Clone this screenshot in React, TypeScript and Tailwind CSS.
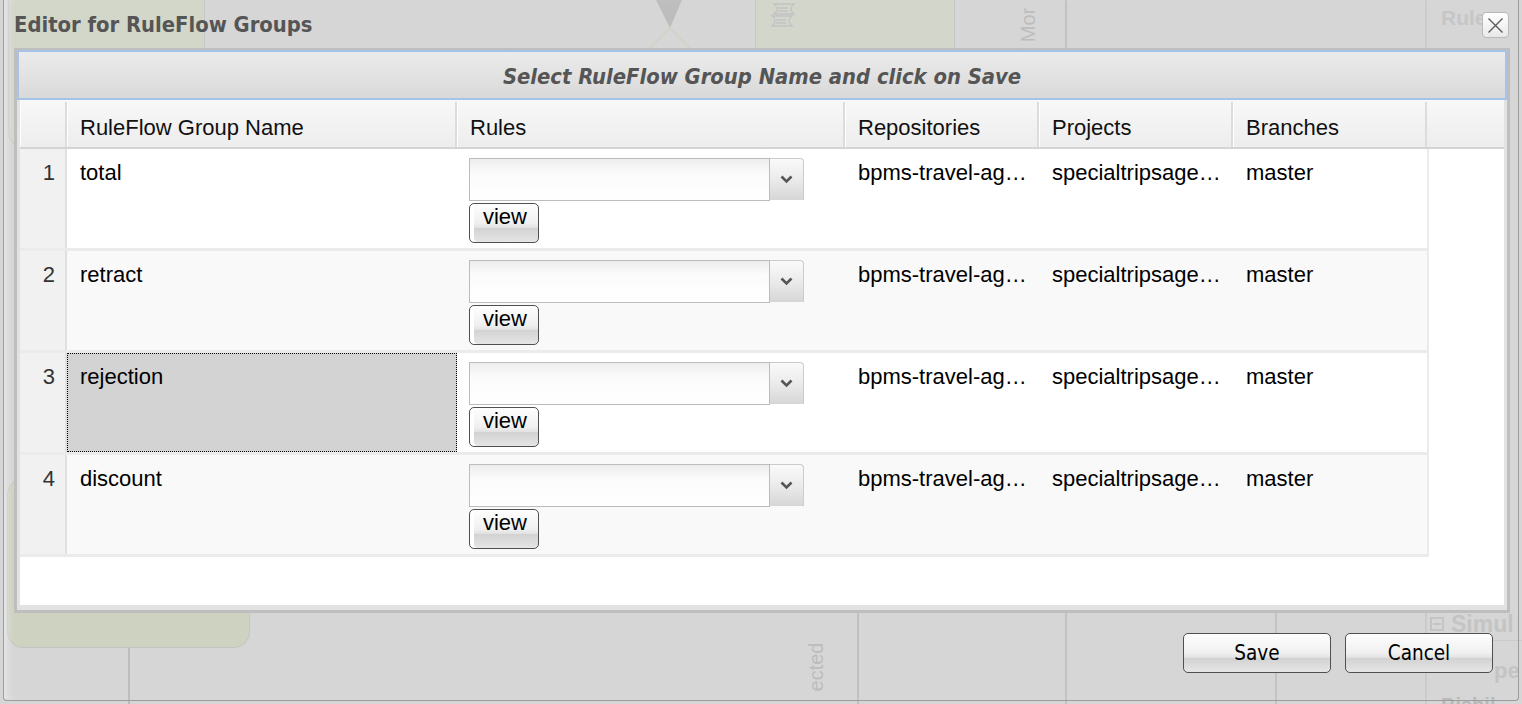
import React from 'react';

const rows = [
    { n: 1, name: 'total' },
    { n: 2, name: 'retract' },
    { n: 3, name: 'rejection', selected: true },
    { n: 4, name: 'discount' },
];

const btnBg = 'bg-[linear-gradient(to_bottom,#fefefe_0%,#f0f0f0_50%,#e2e2e2_62%,#d2d2d2_64%,#e6e6e6_100%)]';
const tahoma = "font-['DejaVu_Sans_Condensed','DejaVu_Sans',sans-serif]";

// faded process canvas that sits behind the modal
const Canvas: React.FC = () => (
    <div className="absolute inset-0 overflow-hidden">
        <div className="absolute left-[8px] top-[-20px] w-[197px] h-[168px] rounded-[16px] border border-[#c6c6c6] bg-[#d3d7c9]" />
        <div className="absolute left-[7px] top-[478px] w-[243px] h-[170px] rounded-[16px] border border-[#c4c4c4] bg-[#cdd2c1]" />
        <div className="absolute left-[755px] top-[-30px] w-[200px] h-[120px] rounded-[14px] border border-[#c6c6c6] bg-[#d3d6cb]" />
        <svg className="absolute left-[766px] top-[2px]" width="34" height="30" viewBox="0 0 34 30" fill="none" stroke="#c4c4c4" strokeWidth="1.5">
            <path d="M8 2h20c-4 3-4 7 0 10H8c4-3 4-7 0-10z" />
            <path d="M6 14h20c-4 3-4 7 0 10H6c4-3 4-7 0-10z" />
            <path d="M12 6h10M12 9h10M10 18h10M10 21h10" />
        </svg>
        <svg className="absolute left-[640px] top-0" width="60" height="50" viewBox="0 0 60 50">
            <path d="M16 0h26L30 28z" fill="#bdbdbd" />
            <path d="M30 28L8 50M30 28l22 22" stroke="#d2d2c2" strokeWidth="1.5" fill="none" />
        </svg>
        <div className="absolute left-[128px] top-[648px] w-[2px] h-[60px] bg-[#bcbcbc]" />
        <div className="absolute left-[857px] top-[612px] w-[2px] h-[100px] bg-[#c0c0c0]" />
        <div className="absolute left-[1065px] top-0 w-[2px] h-[704px] bg-[#c2c2c2]" />
        <div className="absolute left-[1275px] top-[612px] w-[2px] h-[100px] bg-[#c2c2c2]" />
        <div className="absolute left-[1425px] top-0 w-[2px] h-[704px] bg-[#cbcbcb]" />
        <div className="absolute left-[1011px] top-[10px] -rotate-90 origin-center text-[20px] text-[#bdbdbd]">Mor</div>
        <div className="absolute left-[792px] top-[652px] -rotate-90 origin-center text-[20px] text-[#bdbdbd]">ected</div>
        <div className="absolute left-[1441px] top-[2px] text-[21px] font-bold text-[#c6c6c6]">Rule</div>
        <div className="absolute left-[1430px] top-[607px] flex items-center gap-[7px] text-[23px] font-bold text-[#c4c4c4]">
            <span className="w-[14px] h-[14px] border-2 border-[#c4c4c4] flex items-center justify-center"><span className="w-[8px] h-[2px] bg-[#c4c4c4]" /></span>
            Simul
        </div>
        <div className="absolute left-[1430px] top-[640px] w-[92px] h-[1px] bg-[#cacaca]" />
        <div className="absolute left-[1494px] top-[654px] text-[22px] font-bold text-[#c4c4c4]">pe</div>
        <div className="absolute left-[1441px] top-[690px] text-[20px] font-bold text-[#b8b8b8]">Bisbil</div>
    </div>
);

const RuleSelect: React.FC = () => (
    <div className="flex w-[335px] h-[43px]">
        <div className="w-[301px] h-[43px] border border-[#bcbcbc] bg-[linear-gradient(to_bottom,#ededed_0%,#fbfbfb_35%,#ffffff_100%)]" />
        <div className="w-[34px] h-[42px] border-t border-r border-[#cccccc] rounded-tr-[4px] bg-[linear-gradient(to_bottom,#fafafa_0%,#e9e9e9_55%,#d6d6d6_100%)] flex items-center justify-center">
            <svg width="13" height="9" viewBox="0 0 13 9">
                <path d="M1.5 1.5L6.5 6.5L11.5 1.5" stroke="#555" strokeWidth="2.6" fill="none" />
            </svg>
        </div>
    </div>
);

const ViewButton: React.FC = () => (
    <button className={`mt-[2px] w-[70px] h-[40px] rounded-[5px] border border-[#505050] ${btnBg} text-[22px] leading-none text-black pb-[13px] pl-[2px] shadow-[inset_4px_0_0_#ffffff]`}>
        view
    </button>
);

const headCell = 'h-full flex items-center pl-[13px] pt-[5px] border-r-2 border-[#dcdcdc] shadow-[inset_1px_0_0_#ffffff]';

export default function App() {
    return (
        <div className="relative w-[1522px] h-[704px] overflow-hidden bg-[#d6d6d6] font-['Liberation_Sans',Arial,sans-serif]">
            <Canvas />

            {/* modal */}
            <div className="absolute left-[3px] top-0 w-[1516px] h-[701px] border border-t-0 border-[#9c9c9c] rounded-b-[4px] shadow-[inset_8px_0_8px_-6px_#ececec] flex flex-col">
                <div className="h-[48px] flex items-center justify-between pl-[10px] pr-[9px]">
                    <span className={`text-[21.8px] font-bold text-[#555555] ${tahoma} pt-[2px]`}>Editor for RuleFlow Groups</span>
                    <button className="mt-[2px] w-[27px] h-[26px] rounded-[4px] border border-[#b9b9b9] bg-[linear-gradient(to_bottom,#ffffff,#e9e9e9)] flex items-center justify-center">
                        <svg width="17" height="17" viewBox="0 0 17 17">
                            <path d="M1.5 1.5L15.5 15.5M15.5 1.5L1.5 15.5" stroke="#5a5a5a" strokeWidth="1.4" />
                        </svg>
                    </button>
                </div>

                {/* panel */}
                <div className="ml-[10px] w-[1496px] h-[565px] bg-[#bebebe] pl-[3px] pr-[3px] pt-[2px] pb-[3px]">
                    <div className="w-full h-full bg-[#e2e2e2] flex flex-col">
                        <div className="h-[50px] border-2 border-[#a6c4ea] bg-[linear-gradient(to_bottom,#ebebeb_0%,#e4e4e4_40%,#d9d9d9_100%)] flex items-center justify-center pt-[5px]">
                            <span className={`text-[21.8px] font-bold italic text-[#555555] ${tahoma}`}>Select RuleFlow Group Name and click on Save</span>
                        </div>
                        <div className="ml-[3px] mr-[3px] h-[505px] bg-white flex flex-col">
                            {/* header */}
                            <div className="h-[49px] flex pt-[2px] border-b-2 border-[#d4d4d4] bg-[linear-gradient(to_bottom,#f8f8f8,#ededed)] text-[22px] text-[#111]">
                                <div className={`w-[47px] ${headCell}`} />
                                <div className={`w-[390px] ${headCell}`}>RuleFlow Group Name</div>
                                <div className={`w-[388px] ${headCell}`}>Rules</div>
                                <div className={`w-[194px] ${headCell}`}>Repositories</div>
                                <div className={`w-[194px] ${headCell}`}>Projects</div>
                                <div className={`w-[194px] ${headCell}`}>Branches</div>
                                <div className="flex-1 h-full" />
                            </div>
                            {/* rows */}
                            {rows.map(r => (
                                <div key={r.n} className={`w-[1409px] h-[102px] flex border-b-[3px] border-r-2 border-[#ebebeb] text-[22px] text-black ${r.n % 2 === 0 ? 'bg-[#f9f9f9]' : 'bg-white'}`}>
                                    <div className="w-[47px] h-full bg-[#f1f1f1] border-r-2 border-[#e0e0e0] text-right pr-[10px] pt-[7px] text-[#333]">{r.n}</div>
                                    <div className={`w-[390px] h-full ${r.selected ? 'bg-[#d3d3d3] border border-dotted border-black pl-[12px] pt-[6px]' : 'pl-[13px] pt-[7px]'}`}>{r.name}</div>
                                    <div className="w-[388px] h-full pl-[12px] pt-[9px] flex flex-col">
                                        <RuleSelect />
                                        <ViewButton />
                                    </div>
                                    <div className="w-[194px] h-full pl-[13px] pr-[10px] pt-[7px] truncate">bpms-travel-agency</div>
                                    <div className="w-[194px] h-full pl-[13px] pr-[10px] pt-[7px] truncate">specialtripsagency</div>
                                    <div className="w-[194px] h-full pl-[13px] pr-[10px] pt-[7px] truncate">master</div>
                                </div>
                            ))}
                        </div>
                    </div>
                </div>

                {/* footer */}
                <div className="flex justify-end gap-[14px] pt-[20px] pr-[25px]">
                    <button className={`w-[148px] h-[40px] rounded-[5px] border border-[#505050] ${btnBg} text-[20.5px] text-black ${tahoma} pt-[1px]`}>Save</button>
                    <button className={`w-[148px] h-[40px] rounded-[5px] border border-[#505050] ${btnBg} text-[20.5px] text-black ${tahoma} pt-[1px]`}>Cancel</button>
                </div>
            </div>
        </div>
    );
}
